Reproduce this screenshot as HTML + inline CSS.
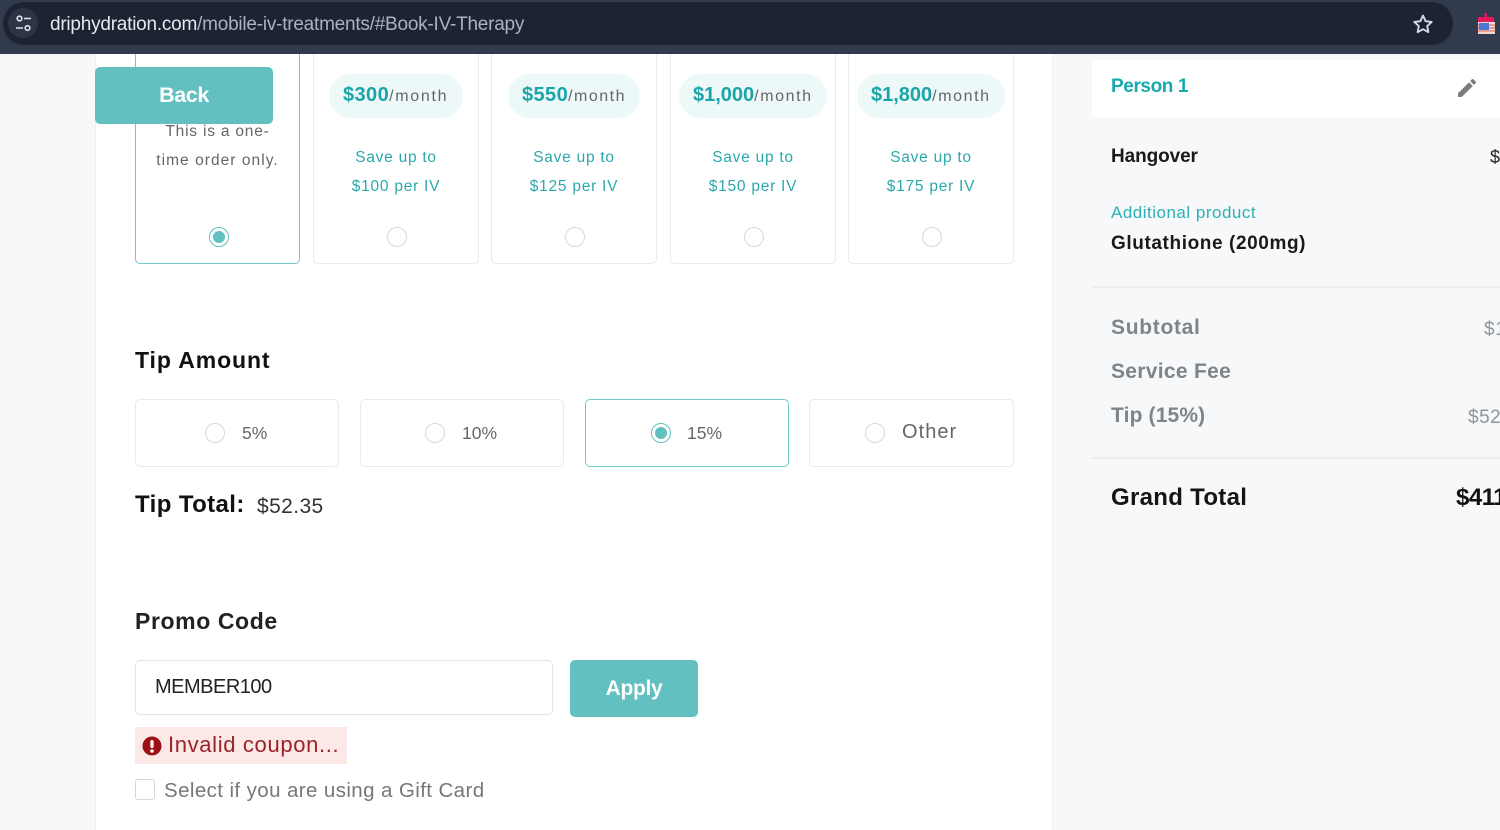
<!DOCTYPE html>
<html><head><meta charset="utf-8"><style>
html,body{margin:0;padding:0}
body{width:1500px;height:830px;overflow:hidden;position:relative;background:#f6f8fa;font-family:"Liberation Sans",sans-serif}
div,span.a,svg.a{position:absolute}
.t{position:absolute;white-space:nowrap;line-height:24px;height:24px}
.card{border:1px solid #e8eaec;border-radius:5px;background:#fff;box-sizing:border-box}
.sel{border:1.5px solid #6fc8ca}
.radio{width:20px;height:20px;border-radius:50%;border:1px solid #d8d8d8;box-sizing:border-box;background:#fff}
.radio.on{border:1px solid #62c0c0}
.radio.on:after{content:"";position:absolute;left:3px;top:3px;width:12px;height:12px;border-radius:50%;background:#62c0c0}
.pill{background:#edf8f9;border-radius:22px;height:44px;top:74px}
.price{font-weight:bold;color:#1ba5a8;font-size:20px;letter-spacing:.4px}
.mo{color:#666;font-size:16px;letter-spacing:1.5px}
.save{color:#2aa9ad;font-size:15.5px;letter-spacing:.75px;text-align:center}
.h{font-weight:bold;color:#111;font-size:23px}
.g{font-weight:bold;color:#808486;font-size:21px;letter-spacing:.6px}
</style></head><body>
<div style="left:95px;top:54px;width:958px;height:776px;box-sizing:border-box;background:#fff;border-left:1px solid #eceef0;border-right:1px solid #eceef0"></div>

<div class="card sel" style="left:135px;top:46px;width:165px;height:218px"></div>
<div class="card" style="left:313px;top:46px;width:166px;height:218px"></div>
<div class="card" style="left:491px;top:46px;width:166px;height:218px"></div>
<div class="card" style="left:670px;top:46px;width:166px;height:218px"></div>
<div class="card" style="left:848px;top:46px;width:166px;height:218px"></div>

<div style="left:0;top:0;width:1500px;height:54px;background:#323a4e"></div>
<div style="left:3px;top:2px;width:1450px;height:43px;background:#1c2333;border-radius:22px"></div>
<div style="left:8px;top:8px;width:30px;height:30px;border-radius:50%;background:#2d3446"></div>
<svg class="a" style="left:14px;top:14px" width="20" height="20" viewBox="0 0 20 20" fill="none" stroke="#dfe3ea" stroke-width="1.6"><circle cx="5.5" cy="4.5" r="2.3"/><path d="M10 4.5h7M2 14h7"/><circle cx="13.5" cy="14" r="2.3"/></svg>
<div class="t" style="left:50px;top:13px;font-size:19px;color:#7f8aa0;letter-spacing:-.23px"><span style="color:#e6e9ef">driphydration.com</span><span style="color:#aab2c0">/mobile-iv-treatments/#Book-IV-Therapy</span></div>
<svg class="a" style="left:1412px;top:13px" width="22" height="22" viewBox="0 0 22 22" fill="none" stroke="#d5d9e2" stroke-width="1.9"><path d="M11 2.5l2.6 5.7 6.1.7-4.5 4.2 1.2 6.1L11 16.2l-5.4 3 1.2-6.1-4.5-4.2 6.1-.7z" stroke-linejoin="round"/></svg>
<svg class="a" style="left:1476px;top:13px" width="20" height="22" viewBox="0 0 20 22"><rect x="8.5" y="0" width="2.4" height="5" fill="#e8185f"/><rect x="2" y="4" width="16" height="7" rx="1.5" fill="#e8185f"/><rect x="2" y="9" width="17" height="12" fill="#f3d6cf"/><path d="M2 12h17M2 15h17M2 18h17" stroke="#e07a70" stroke-width="1.2"/><rect x="3" y="10" width="10" height="7" fill="#4a78d8"/></svg>

<div style="left:95px;top:67px;width:178px;height:57px;background:#62c0c0;border-radius:5px"></div>
<div class="t" style="left:95px;top:83px;width:178px;text-align:center;color:#fff;font-weight:bold;font-size:21.5px;letter-spacing:-.4px">Back</div>
<div class="t" style="left:135px;top:120px;width:165px;text-align:center;color:#666;font-size:15.5px;letter-spacing:.8px">This is a one-</div>
<div class="t" style="left:135px;top:149px;width:165px;text-align:center;color:#666;font-size:15.5px;letter-spacing:1.05px">time order only.</div>

<div class="pill" style="left:329px;width:134px"></div>
<div class="t" style="left:343px;top:83px"><span class="price">$300</span><span class="mo" style="letter-spacing:1.7px">/month</span></div>
<div class="pill" style="left:508px;width:132px"></div>
<div class="t" style="left:522px;top:83px"><span class="price">$550</span><span class="mo">/month</span></div>
<div class="pill" style="left:679px;width:148px"></div>
<div class="t" style="left:693px;top:83px"><span class="price" style="letter-spacing:0">$1,000</span><span class="mo" style="letter-spacing:1.6px">/month</span></div>
<div class="pill" style="left:857px;width:148px"></div>
<div class="t" style="left:871px;top:83px"><span class="price" style="letter-spacing:0">$1,800</span><span class="mo" style="letter-spacing:1.6px">/month</span></div>

<div class="t save" style="left:313px;top:146px;width:166px">Save up to</div>
<div class="t save" style="left:313px;top:175px;width:166px">$100 per IV</div>
<div class="t save" style="left:491px;top:146px;width:166px">Save up to</div>
<div class="t save" style="left:491px;top:175px;width:166px">$125 per IV</div>
<div class="t save" style="left:670px;top:146px;width:166px">Save up to</div>
<div class="t save" style="left:670px;top:175px;width:166px">$150 per IV</div>
<div class="t save" style="left:848px;top:146px;width:166px">Save up to</div>
<div class="t save" style="left:848px;top:175px;width:166px">$175 per IV</div>

<div class="radio on" style="left:209px;top:227px"></div>
<div class="radio" style="left:387px;top:227px"></div>
<div class="radio" style="left:565px;top:227px"></div>
<div class="radio" style="left:744px;top:227px"></div>
<div class="radio" style="left:922px;top:227px"></div>

<div class="t h" style="left:135px;top:348px;letter-spacing:.9px">Tip Amount</div>
<div class="card" style="left:135px;top:399px;width:204px;height:68px"></div>
<div class="card" style="left:360px;top:399px;width:204px;height:68px"></div>
<div class="card sel" style="left:585px;top:399px;width:204px;height:68px"></div>
<div class="card" style="left:809px;top:399px;width:205px;height:68px"></div>
<div class="radio" style="left:205px;top:423px"></div>
<div class="radio" style="left:425px;top:423px"></div>
<div class="radio on" style="left:651px;top:423px"></div>
<div class="radio" style="left:865px;top:423px"></div>
<div class="t" style="left:242px;top:421px;color:#666;font-size:17.5px">5%</div>
<div class="t" style="left:462px;top:421px;color:#666;font-size:17.5px">10%</div>
<div class="t" style="left:687px;top:421px;color:#666;font-size:17.5px">15%</div>
<div class="t" style="left:902px;top:420px;color:#666;font-size:20px;letter-spacing:1.05px">Other</div>
<div class="t h" style="left:135px;top:493px;font-size:24px;letter-spacing:.4px">Tip Total:</div>
<div class="t" style="left:257px;top:495px;font-size:21px;color:#333;letter-spacing:.4px">$52.35</div>

<div class="t h" style="left:135px;top:609px;letter-spacing:.6px;color:#222">Promo Code</div>
<div style="left:135px;top:660px;width:418px;height:55px;box-sizing:border-box;border:1px solid #e2e4e6;border-radius:5px;background:#fff"></div>
<div class="t" style="left:155px;top:675px;font-size:20px;color:#222;letter-spacing:-.5px">MEMBER100</div>
<div style="left:570px;top:660px;width:128px;height:57px;background:#62c0c0;border-radius:5px"></div>
<div class="t" style="left:570px;top:677px;width:128px;text-align:center;color:#fff;font-weight:bold;font-size:21px;letter-spacing:-.3px">Apply</div>
<div style="left:135px;top:727px;width:212px;height:37px;background:#fde8e8"></div>
<svg class="a" style="left:142px;top:736px" width="20" height="20" viewBox="0 0 20 20"><circle cx="10" cy="10" r="9.5" fill="#9b1115"/><rect x="8.4" y="4" width="3.2" height="8" rx="1.4" fill="#fff"/><circle cx="10" cy="15" r="1.8" fill="#fff"/></svg>
<div class="t" style="left:168px;top:733px;font-size:22px;color:#9b2226;letter-spacing:.65px">Invalid coupon...</div>
<div style="left:135px;top:779px;width:20px;height:21px;box-sizing:border-box;border:1px solid #d5d7d9;border-radius:3px;background:#fff"></div>
<div class="t" style="left:164px;top:779px;font-size:20.5px;color:#777;letter-spacing:.4px">Select if you are using a Gift Card</div>

<div style="left:1092px;top:60px;width:408px;height:57px;background:#fff"></div>
<div class="t" style="left:1111px;top:75px;font-size:19px;font-weight:bold;color:#17aaad;letter-spacing:-.4px">Person 1</div>
<svg class="a" style="left:1455px;top:76px" width="24" height="24" viewBox="0 0 24 24" fill="#7d7d7d"><path d="M3 17.25V21h3.75L17.81 9.94l-3.75-3.75L3 17.25zM20.71 7.04a1 1 0 0 0 0-1.41l-2.34-2.34a1 1 0 0 0-1.41 0l-1.83 1.83 3.75 3.75 1.83-1.83z"/></svg>
<div class="t" style="left:1111px;top:145px;font-size:19px;font-weight:bold;color:#1a1a1a;letter-spacing:-.1px">Hangover</div>
<div class="t" style="left:1490px;top:145px;font-size:18px;color:#222">$</div>
<div class="t" style="left:1111px;top:201px;font-size:17px;color:#2cb0b3;letter-spacing:.5px">Additional product</div>
<div class="t" style="left:1111px;top:232px;font-size:19px;font-weight:bold;color:#1a1a1a;letter-spacing:.6px">Glutathione (200mg)</div>
<div style="left:1092px;top:286px;width:408px;height:2px;background:#eceef0"></div>
<div class="t g" style="left:1111px;top:316px;letter-spacing:.7px">Subtotal</div>
<div class="t g" style="left:1111px;top:360px;letter-spacing:.3px">Service Fee</div>
<div class="t g" style="left:1111px;top:404px;letter-spacing:.15px">Tip (15%)</div>
<div class="t" style="left:1484px;top:318px;font-size:19px;color:#909496;letter-spacing:.5px">$1</div>
<div class="t" style="left:1468px;top:406px;font-size:19px;color:#909496;letter-spacing:.5px">$52</div>
<div style="left:1092px;top:457px;width:408px;height:2px;background:#eceef0"></div>
<div class="t" style="left:1111px;top:486px;font-size:24px;font-weight:bold;color:#151515;letter-spacing:.3px">Grand Total</div>
<div class="t" style="left:1456px;top:486px;font-size:24px;font-weight:bold;color:#111;letter-spacing:-.5px">$411</div>
</body></html>
